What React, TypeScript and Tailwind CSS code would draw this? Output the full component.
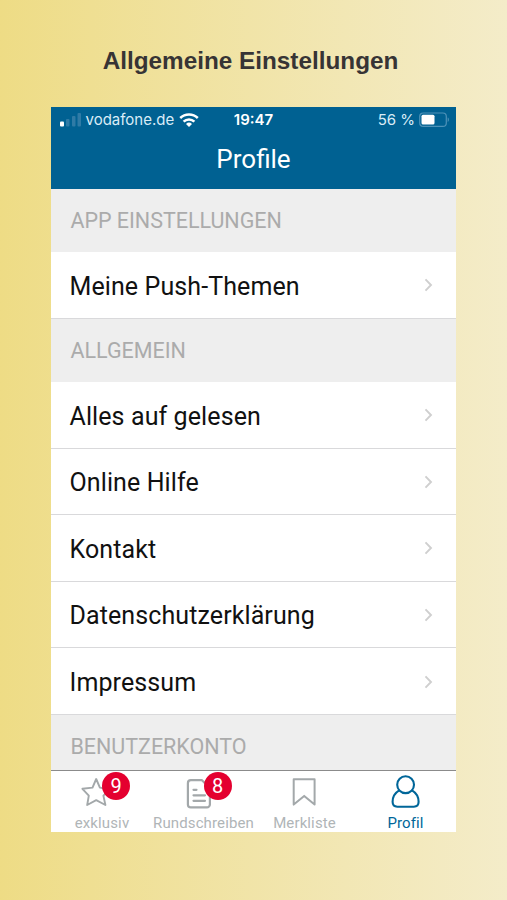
import React from 'react'

type Tab = {
  label: string
  icon: React.ReactNode
  width: string
  badge?: number
  active?: boolean
}

const general = ['Alles auf gelesen', 'Online Hilfe', 'Kontakt', 'Datenschutzerklärung', 'Impressum']

const tabs: Tab[] = [
  { label: 'exklusiv', icon: <StarIcon />, width: 'w-[102px]', badge: 9 },
  { label: 'Rundschreiben', icon: <DocIcon />, width: 'w-[101px]', badge: 8 },
  { label: 'Merkliste', icon: <BookmarkIcon />, width: 'w-[101px]' },
  { label: 'Profil', icon: <UserIcon />, width: 'w-[101px]', active: true }
]

function StarIcon() {
  return (
    <svg viewBox="0 0 32 36" className="h-9 w-8 overflow-visible" fill="none" stroke="currentColor" strokeWidth="1.9" strokeLinejoin="round">
      <path d="M16.2 8 19.9 16.6 29.6 18.6 23.4 24.6 25.4 34 16.2 29.2 7.2 34 8.8 24.6 2.4 17.8 12.5 16.6Z" />
    </svg>
  )
}

function DocIcon() {
  return (
    <svg viewBox="0 0 32 36" className="h-9 w-8 overflow-visible" fill="none" stroke="currentColor" strokeWidth="2.2" strokeLinecap="round" strokeLinejoin="round">
      <path d="M20 9.2H8.9a3 3 0 0 0-3 3v21.2a3 3 0 0 0 3 3h16a3 3 0 0 0 3-3V17.2z" />
      <path d="M11.5 18.8h3M11.5 24.3H23M11.5 29.8H23" />
    </svg>
  )
}

function BookmarkIcon() {
  return (
    <svg viewBox="0 0 32 36" className="h-9 w-8 overflow-visible" fill="none" stroke="currentColor" strokeWidth="2" strokeLinejoin="round">
      <path d="M4.7 8.2h20.9v25.4l-10.4-8.7-10.5 8.7z" />
    </svg>
  )
}

function UserIcon() {
  return (
    <svg viewBox="0 0 32 36" className="h-9 w-8 overflow-visible" fill="none" stroke="currentColor" strokeWidth="2.1" strokeLinejoin="round">
      <circle cx="15.6" cy="13.7" r="8.4" />
      <path d="M9.2 19.4C5.2 21.8 2.6 26 2.6 30.8c0 3 1.8 4.9 4.7 4.9h16.6c2.9 0 4.7-1.9 4.7-4.9 0-4.8-2.6-9-6.6-11.4" />
    </svg>
  )
}

function Chevron() {
  return (
    <svg viewBox="0 0 10 14" className="mb-[2px] h-[14px] w-[10px]" fill="none" stroke="#cfcfcf" strokeWidth="1.9">
      <path d="M1.5 1.4 7 7l-5.5 5.6" />
    </svg>
  )
}

function StatusBar() {
  return (
    <div className="relative flex h-[26px] items-center pl-[8.5px] pr-[6px] font-[Inter,sans-serif] text-[15px] text-[#d9ecf7]">
      <svg viewBox="0 0 22 14" className="h-[14px] w-[22px]">
        <rect x="0" y="8.5" width="4" height="5" rx="1" fill="#fff" />
        <rect x="6" y="6" width="3.5" height="7.5" rx="1" fill="#2f7ba6" />
        <rect x="12" y="3" width="3.5" height="10.5" rx="1" fill="#2f7ba6" />
        <rect x="17.5" y="0" width="3.5" height="13.5" rx="1" fill="#2f7ba6" />
      </svg>
      <span className="ml-1 w-[89px] whitespace-nowrap">vodafone.de</span>
      <svg viewBox="0 0 20 14" className="ml-[4px] h-[14px] w-5" fill="none" stroke="#fff" strokeWidth="2.5">
        <path d="M1.2 5a12.6 12.6 0 0 1 17.6 0" />
        <path d="M4.6 8.6a7.7 7.7 0 0 1 10.8 0" />
        <path d="M10 14 7 11a4.3 4.3 0 0 1 6 0z" fill="#fff" stroke="none" />
      </svg>
      <span className="absolute inset-x-0 text-center font-semibold text-white">19:47</span>
      <span className="ml-auto">56 %</span>
      <svg viewBox="0 0 31 16" className="ml-[4px] h-4 w-[31px]">
        <rect x="0.7" y="1" width="26.6" height="13.4" rx="3.5" fill="none" stroke="#4d92b8" strokeWidth="1.2" />
        <rect x="2.5" y="2.8" width="13" height="9.8" rx="1.5" fill="#fff" />
        <path d="M28.7 5.5c1.6.6 1.6 3.8 0 4.4z" fill="#4d92b8" />
      </svg>
    </div>
  )
}

function Section({ title }: { title: string }) {
  return (
    <div className="flex h-[63.2px] shrink-0 items-center bg-[#eeeeee] pl-[19.5px] pt-[2px] text-[21.5px] tracking-[-0.03px] text-[#ababab]">
      {title}
    </div>
  )
}

function Row({ label }: { label: string }) {
  return (
    <div className="flex h-[66.6px] shrink-0 items-center justify-between border-b border-[#d9d9db] bg-white pl-[18.5px] pr-[22px] pt-[3px] text-[25px] tracking-[0.1px] text-[#111]">
      {label}
      <Chevron />
    </div>
  )
}

function TabItem({ tab }: { tab: Tab }) {
  return (
    <div className={`flex flex-col items-center ${tab.width} ${tab.active ? 'text-[#006699]' : 'text-[#a3a8aa]'}`}>
      <div className={tab.badge ? 'relative mr-3' : 'relative'}>
        {tab.icon}
        {tab.badge ? (
          <span className="absolute left-[22px] top-[1px] flex size-7 items-center justify-center rounded-full bg-[#e4002f] text-[20px] text-white">
            {tab.badge}
          </span>
        ) : null}
      </div>
      <span className={`mt-[7px] whitespace-nowrap text-[15px] leading-[18px] tracking-[0.12px] ${tab.active ? '' : 'text-[#b0b5b7]'}`}>{tab.label}</span>
    </div>
  )
}

export default function App() {
  return (
    <div className="h-[900px] w-[507px] overflow-hidden bg-linear-to-r from-[#eedc85] to-[#f4ecc9]">
      <h1 className="pr-[6px] pt-[43px] text-center font-['Liberation_Sans',sans-serif] text-[24.3px] font-bold leading-9 text-[#373435]">
        Allgemeine Einstellungen
      </h1>
      <div className="ml-[51px] mt-[28px] flex h-[725px] w-[405px] flex-col bg-white font-[Roboto,sans-serif]">
        <header className="h-[82px] shrink-0 bg-[#006192]">
          <StatusBar />
          <div className="flex h-[54px] items-center justify-center pb-px text-[26px] text-white">Profile</div>
        </header>
        <main className="flex h-[581px] flex-col overflow-hidden">
          <Section title="APP EINSTELLUNGEN" />
          <Row label="Meine Push-Themen" />
          <Section title="ALLGEMEIN" />
          {general.map(label => <Row key={label} label={label} />)}
          <Section title="BENUTZERKONTO" />
        </main>
        <nav className="flex h-[62px] shrink-0 border-t border-[#8b8b8b] bg-white">
          {tabs.map(tab => <TabItem key={tab.label} tab={tab} />)}
        </nav>
      </div>
    </div>
  )
}
